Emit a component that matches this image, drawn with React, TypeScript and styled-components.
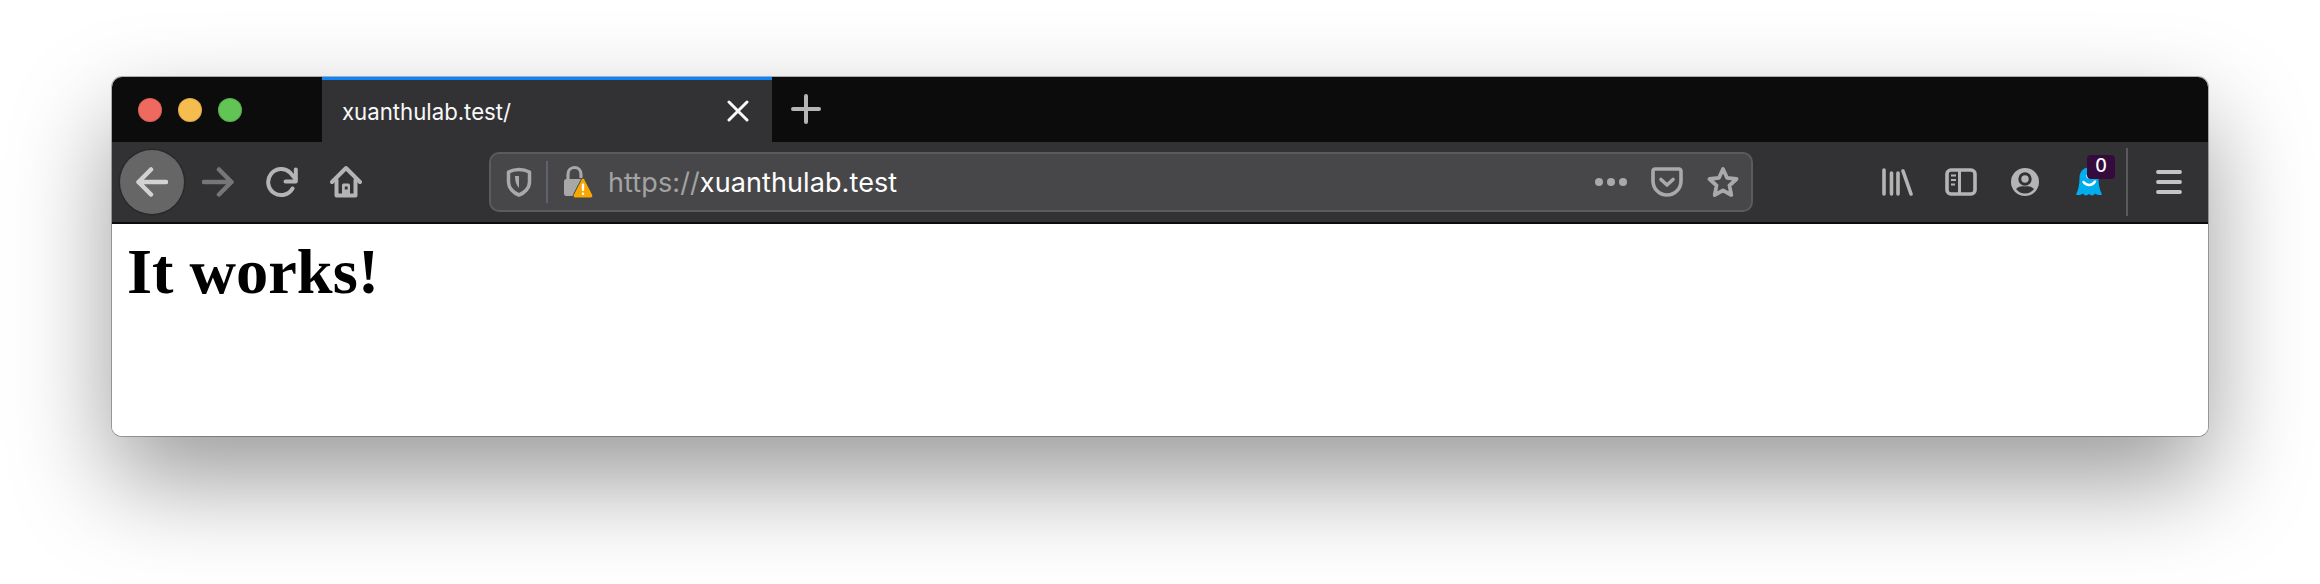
import React from "react";
import styled, { createGlobalStyle } from "styled-components";

const Global = createGlobalStyle`
  html, body { margin: 0; padding: 0; background: #fff; }
  #root { display: block; }
`;

const Stage = styled.div`
  width: 2320px;
  height: 584px;
  padding: 77px 112px 0;
  box-sizing: border-box;
  overflow: hidden;
  background: #fff;
`;

const Win = styled.div`
  width: 2096px;
  height: 359px;
  border-radius: 10px;
  overflow: hidden;
  display: flex;
  flex-direction: column;
  background: #fff;
`;

const Frame = styled.div`
  border-radius: 10px;
  width: 2096px;
  box-shadow: 0 0 0 1px rgba(0, 0, 0, 0.28), 0 44px 100px rgba(0, 0, 0, 0.4);
`;

const TabBar = styled.div`
  height: 65px;
  flex: none;
  display: flex;
  background: #0c0c0d;
`;

const Lights = styled.div`
  width: 210px;
  box-sizing: border-box;
  padding-left: 26px;
  display: flex;
  align-items: center;
  gap: 16px;
`;

const Light = styled.span<{ $c: string }>`
  width: 24px;
  height: 24px;
  border-radius: 50%;
  background: ${(p) => p.$c};
  box-shadow: inset 0 0 0 1px rgba(0, 0, 0, 0.1);
`;

const Tab = styled.div`
  width: 450px;
  box-sizing: border-box;
  border-top: 3px solid #0a84ff;
  background: #323234;
  display: flex;
  align-items: center;
  justify-content: space-between;
  padding: 0 23px 0 20px;
`;

const TabTitle = styled.span`
  font: 400 22.2px Inter, "Liberation Sans", sans-serif;
  color: #f9f9fa;
`;

const NewTab = styled.div`
  width: 68px;
  padding-bottom: 2px;
  display: flex;
  align-items: center;
  justify-content: center;
`;

const ToolBar = styled.div`
  height: 80px;
  flex: none;
  display: flex;
  align-items: center;
  background: #323234;
  border-bottom: 2px solid #0c0c0d;
  box-sizing: content-box;
  padding-left: 8px;
`;

const BackBtn = styled.div`
  width: 64px;
  height: 64px;
  margin-right: 2px;
  border-radius: 50%;
  background: #666667;
  box-shadow: 0 0 0 1.5px #2a2a2b;
  display: flex;
  align-items: center;
  justify-content: center;
`;

const Btn = styled.div`
  width: 64px;
  height: 64px;
  flex: none;
  display: flex;
  align-items: center;
  justify-content: center;
`;

const UrlBar = styled.div`
  width: 1264px;
  height: 60px;
  margin-left: 111px;
  box-sizing: border-box;
  border: 2px solid #5b5b5e;
  border-radius: 10px;
  background: #474749;
  display: flex;
  align-items: center;
  padding-left: 15px;
`;

const UrlDivider = styled.span`
  width: 2px;
  height: 42px;
  margin: 0 15px 0 14px;
  background: #5d626e;
`;

const UrlText = styled.span`
  margin-left: 15px;
  flex: 1;
  font: 400 27px Inter, "Liberation Sans", sans-serif;
  letter-spacing: 0.1px;
  color: #fff;
`;

const Faded = styled.span`
  color: #a3a3a4;
`;

const UrlActions = styled.div`
  display: flex;
  align-items: center;
  gap: 24px;
  padding-right: 12px;
`;

const Tools = styled.div`
  margin-left: 112px;
  display: flex;
  align-items: center;
`;

const ToolBtn = styled.div`
  position: relative;
  width: 64px;
  height: 64px;
  display: flex;
  align-items: center;
  justify-content: center;
`;

const Badge = styled.span`
  position: absolute;
  left: 30px;
  top: 5px;
  width: 28px;
  height: 24px;
  border-radius: 4px;
  background: #340b3c;
  color: #fff;
  font: 500 18px/22px Inter, "Liberation Sans", sans-serif;
  text-align: center;
`;

const ToolDivider = styled.span`
  width: 2px;
  height: 68px;
  margin: 0 9px 0 5px;
  background: #5a5a5c;
`;

const Content = styled.div`
  flex: 1;
  background: #fff;
  padding: 0 15px;
`;

const Heading = styled.h1`
  margin: 11px 0 0;
  font: 700 64.4px/74px "Liberation Serif", "Times New Roman", serif;
  color: #000;
`;

const G = "#b4b4b5";

const Back = () => (
  <svg width="32" height="32" viewBox="0 0 32 32" fill="none" stroke="#d2d2d3" strokeWidth="4.5" strokeLinecap="round" strokeLinejoin="round">
    <path d="M2.5 16H30M15 3.5 2.5 16 15 28.5" />
  </svg>
);
const Forward = () => (
  <svg width="32" height="32" viewBox="0 0 32 32" fill="none" stroke="#767677" strokeWidth="4.5" strokeLinecap="round" strokeLinejoin="round">
    <path d="M2 16H29.5M17 3.5 29.5 16 17 28.5" />
  </svg>
);
const Reload = () => (
  <svg width="32" height="32" viewBox="0 0 32 32" fill="none" stroke={G} strokeWidth="4" strokeLinecap="round" strokeLinejoin="round">
    <path d="M26.500 22.500A13 13 0 1 1 24 6.500L29.500 13" />
    <path d="M29.800 3.500V15.500H19.500" />
  </svg>
);
const Home = () => (
  <svg width="32" height="34" viewBox="0 0 32 34" fill="none" stroke={G} strokeWidth="4" strokeLinecap="round" strokeLinejoin="round">
    <path d="M2 17 16 3 30 17" />
    <path d="M6.500 15V30.500H25.500V15" />
    <path d="M12 30V20.500C12 19 13 18.500 14 18.500H18C19 18.500 20 19 20 20.500V30Z" fill={G} stroke="none" />
    <rect x="14.800" y="21.500" width="2.800" height="3" fill="#323234" stroke="none" />
  </svg>
);
const Close = () => (
  <svg width="22" height="22" viewBox="0 0 22 22" fill="none" stroke="#f9f9fa" strokeWidth="3" strokeLinecap="round">
    <path d="M2 2 20 20M20 2 2 20" />
  </svg>
);
const Plus = () => (
  <svg width="30" height="30" viewBox="0 0 30 30" fill="none" stroke="#b5b5b5" strokeWidth="4" strokeLinecap="round">
    <path d="M15 2V28M2 15H28" />
  </svg>
);
const Shield = () => (
  <svg width="26" height="30" viewBox="0 0 26 30" fill="none" stroke="#a9a9aa" strokeWidth="3.500" strokeLinejoin="round">
    <path d="M13 2.500C9 2.500 5.500 3.500 2.500 5V15C2.500 21 7.500 26 13 28C18.500 26 23.500 21 23.500 15V5C20.500 3.500 17 2.500 13 2.500Z" />
    <path d="M13 9H9C9 14 10 18 13 21Z" fill="#a9a9aa" stroke="none" />
  </svg>
);
const Lock = () => (
  <svg width="30" height="34" viewBox="0 0 30 34" fill="none">
    <path d="M5 15V9.500C5 5.500 7.500 2.500 11.500 2.500C15 2.500 18 5 18 9.500V13" stroke="#a8a8a9" strokeWidth="3.200" />
    <rect x="1" y="14" width="20" height="17" rx="2.500" fill="#a8a8a9" />
    <path d="M20 13C20.500 13 21.100 13.300 21.500 14L29.500 29.500C30.300 31.200 29.500 33 27.500 33H12.500C10.500 33 9.700 31.200 10.500 29.500L18.500 14C18.900 13.300 19.500 13 20 13Z" fill="#f6a800" stroke="#474749" strokeWidth="1" />
    <rect x="18.800" y="18.500" width="2.400" height="7.500" rx="1" fill="#fff" />
    <rect x="18.800" y="27.500" width="2.400" height="2.400" rx="1" fill="#fff" />
  </svg>
);
const Dots = () => (
  <svg width="32" height="8" viewBox="0 0 32 8" fill="#a9a9aa">
    <circle cx="4" cy="4" r="4" />
    <circle cx="16" cy="4" r="4" />
    <circle cx="28" cy="4" r="4" />
  </svg>
);
const Pocket = () => (
  <svg width="32" height="30" viewBox="0 0 32 30" fill="none" stroke="#a9a9aa" strokeWidth="3.600" strokeLinecap="round" strokeLinejoin="round">
    <path d="M4 2H28C29 2 30 3 30 4V14C30 22 23.500 28 16 28C8.500 28 2 22 2 14V4C2 3 3 2 4 2Z" />
    <path d="M10 12.500 16 18 22 12.500" />
  </svg>
);
const Star = () => (
  <svg width="32" height="32" viewBox="0 0 32 32" fill="none" stroke="#a9a9aa" strokeWidth="3.800" strokeLinejoin="round">
    <path d="M16 3 20 11.800 29.500 13 22.500 19.500 24.300 29 16 24.300 7.700 29 9.500 19.500 2.500 13 12 11.800Z" />
  </svg>
);
const Library = () => (
  <svg width="32" height="30" viewBox="0 0 32 30" fill="none" stroke={G} strokeWidth="3.600" strokeLinecap="round">
    <path d="M3 3V27M10.500 6V27M17 6V27M22 4 30 27" />
  </svg>
);
const Sidebar = () => (
  <svg width="32" height="28" viewBox="0 0 32 28" fill="none" stroke={G}>
    <rect x="2" y="2" width="28" height="24" rx="4" strokeWidth="3.600" />
    <path d="M14.500 2V26" strokeWidth="3" />
    <path d="M6 7.500H11M6 12H11M6 16.500H10" strokeWidth="2.200" />
  </svg>
);
const Account = () => (
  <svg width="28" height="28" viewBox="0 0 28 28">
    <circle cx="14" cy="14" r="14" fill={G} />
    <circle cx="14" cy="11" r="5.200" fill="none" stroke="#323234" strokeWidth="3" />
    <path d="M5 21C8 18 11 18 14 18.500C17 18 20 18 23 21C20.500 24.200 17.500 25.500 14 25.500C10.500 25.500 7.500 24.200 5 21Z" fill="#323234" />
  </svg>
);
const Ghost = () => (
  <svg width="28" height="30" viewBox="0 0 28 30">
    <path d="M14 0.500C8 0.500 4.500 5 4.500 11C4.500 17 3.500 23 1 27.500C3.500 28.500 6 28 8 26.500C9.500 29 12 29 14 27C16 29 18.500 29 20 26.500C22 28 24.500 28.500 27 27.500C24.500 23 23.500 17 23.500 11C23.500 5 20 0.500 14 0.500Z" fill="#00aeef" />
    <circle cx="14" cy="9" r="2.600" fill="#fff" />
    <path d="M8.500 15C11.500 19 17 19 20 14.500" fill="none" stroke="#fff" strokeWidth="2.400" strokeLinecap="round" />
  </svg>
);
const Menu = () => (
  <svg width="26" height="26" viewBox="0 0 26 26" fill="none" stroke="#c4c4c5" strokeWidth="3.800" strokeLinecap="round">
    <path d="M2 3H24M2 13H24M2 23H24" />
  </svg>
);

export default function App() {
  return (
    <Stage>
      <Global />
      <Frame>
        <Win>
          <TabBar>
            <Lights>
              <Light $c="#ee6a5f" />
              <Light $c="#f5bd4f" />
              <Light $c="#61c454" />
            </Lights>
            <Tab>
              <TabTitle>xuanthulab.test/</TabTitle>
              <Close />
            </Tab>
            <NewTab>
              <Plus />
            </NewTab>
          </TabBar>
          <ToolBar>
            <BackBtn>
              <Back />
            </BackBtn>
            <Btn>
              <Forward />
            </Btn>
            <Btn>
              <Reload />
            </Btn>
            <Btn>
              <Home />
            </Btn>
            <UrlBar>
              <Shield />
              <UrlDivider />
              <Lock />
              <UrlText>
                <Faded>https://</Faded>xuanthulab.test
              </UrlText>
              <UrlActions>
                <Dots />
                <Pocket />
                <Star />
              </UrlActions>
            </UrlBar>
            <Tools>
              <ToolBtn>
                <Library />
              </ToolBtn>
              <ToolBtn>
                <Sidebar />
              </ToolBtn>
              <ToolBtn>
                <Account />
              </ToolBtn>
              <ToolBtn>
                <Ghost />
                <Badge>0</Badge>
              </ToolBtn>
              <ToolDivider />
              <ToolBtn>
                <Menu />
              </ToolBtn>
            </Tools>
          </ToolBar>
          <Content>
            <Heading>It works!</Heading>
          </Content>
        </Win>
      </Frame>
    </Stage>
  );
}
